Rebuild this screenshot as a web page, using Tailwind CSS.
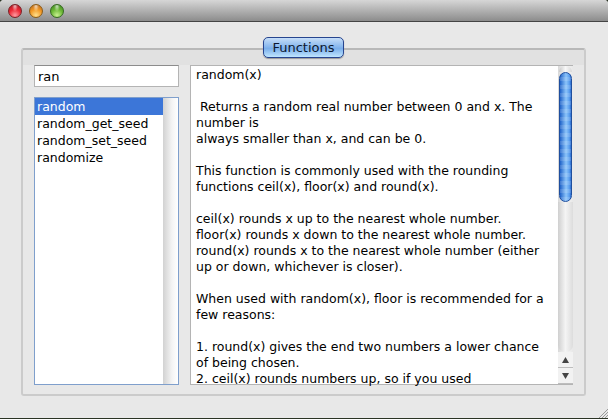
<!DOCTYPE html>
<html lang="en">
<head>
  <meta charset="UTF-8">
  <title>Functions</title>
  <script src="https://cdn.jsdelivr.net/npm/@tailwindcss/browser@4"></script>
</head>
<body class="w-[608px] h-[419px] overflow-hidden bg-[#2a3324] font-['DejaVu_Sans',sans-serif] text-[12px] text-black">

  <div class="relative w-[608px] h-[418px] flex flex-col bg-[#e8e8e8] rounded-t-[4px] overflow-hidden">

    <!-- title bar -->
    <div class="h-[22px] shrink-0 flex items-center gap-[7px] pl-[8px] pt-[1px] border-b border-[#444] bg-[linear-gradient(to_bottom,#d6d6d6,#8c8c8c)]">
      <span class="w-[14px] h-[14px] rounded-full border border-[#7a2226] bg-[radial-gradient(ellipse_at_50%_10%,#ffffffb0,transparent_35%),radial-gradient(circle_at_50%_85%,#ff9aa0,#ee2a36_50%,#a01620)]"></span>
      <span class="w-[14px] h-[14px] rounded-full border border-[#8a5c18] bg-[radial-gradient(ellipse_at_50%_10%,#ffffffb0,transparent_35%),radial-gradient(circle_at_50%_85%,#ffe08c,#f29a26_50%,#b0601a)]"></span>
      <span class="w-[14px] h-[14px] rounded-full border border-[#356a20] bg-[radial-gradient(ellipse_at_50%_10%,#ffffffb0,transparent_35%),radial-gradient(circle_at_50%_85%,#c8f090,#6cb836_50%,#3a8020)]"></span>
    </div>

    <!-- group box -->
    <div class="relative mt-[26px] ml-[21px] w-[565px] h-[348px] flex gap-[11px] pt-[15px] pl-[11px] rounded-[3px] border-2 border-[#cbcbcb] border-t-[#b8b8b8] bg-[linear-gradient(to_bottom,#e1e1e1_15px,#e8e8e8_15px)]">

      <!-- tab button -->
      <div class="absolute left-[240px] top-[-13px] w-[81px] h-[21px] flex items-center justify-center rounded-[5px] border border-[#27458f] bg-[linear-gradient(to_bottom,#c6def8,#8ab8ee_45%,#7aaeea_55%,#bfe6ff)] shadow-[0_1px_1px_#999] text-[13px] text-[#0c1830]">Functions</div>

      <!-- left column -->
      <div class="w-[145px] flex flex-col gap-[10px]">
        <input value="ran" class="w-[145px] h-[22px] pl-[3px] pt-[1px] bg-white border border-[#b4b4b4] border-t-[#8c8c8c] text-[13px] text-black outline-none">
        <div class="h-[288px] flex border border-[#7f9fcc] bg-white">
          <ul class="flex-1 text-[12.5px] leading-[16px]">
            <li class="pl-[2px] pt-[1px] bg-[#3c76d8] text-white">random</li>
            <li class="pl-[2px] pt-[1px]">random_get_seed</li>
            <li class="pl-[2px] pt-[1px]">random_set_seed</li>
            <li class="pl-[2px] pt-[1px]">randomize</li>
          </ul>
          <div class="w-[15px] bg-[linear-gradient(to_right,#d2d2d2,#f4f4f4_60%,#fff)]"></div>
        </div>
      </div>

      <!-- help text -->
      <div class="w-[383px] h-[320px] flex border border-[#b4b4b4] border-r-0 bg-white">
        <div class="flex-1 pl-[5px] pt-[1px] text-[12.5px] leading-[16px] whitespace-pre">random(x)

 Returns a random real number between 0 and x. The
number is
always smaller than x, and can be 0.

This function is commonly used with the rounding
functions ceil(x), floor(x) and round(x).

ceil(x) rounds x up to the nearest whole number.
floor(x) rounds x down to the nearest whole number.
round(x) rounds x to the nearest whole number (either
up or down, whichever is closer).

When used with random(x), floor is recommended for a
few reasons:

1. round(x) gives the end two numbers a lower chance
of being chosen.
2. ceil(x) rounds numbers up, so if you used</div>

        <!-- scroll bar -->
        <div class="w-[15px] shrink-0 flex flex-col bg-[linear-gradient(to_right,#d8d8d8,#f6f6f6_50%,#e8e8e8)]">
          <div class="h-[6px] mx-[1px] rounded-t-[6px] bg-[linear-gradient(to_right,#c8c8c8,#f8f8f8,#d8d8d8)]"></div>
          <div class="h-[130px] mx-[1px] rounded-[7px] border border-[#1f4f9e] bg-[repeating-linear-gradient(to_bottom,#ffffff00_0,#ffffff00_4px,#ffffff22_4px,#ffffff22_8px),linear-gradient(to_right,#1f62c8,#8cc4fa_55%,#5a9eee_85%,#2a6cd0)]"></div>
          <div class="flex-1 rounded-b-[7px] bg-[linear-gradient(to_right,#cfcfcf,#f4f4f4_50%,#dcdcdc)]"></div>
          <div class="h-[16px] flex items-center justify-center border-b border-[#bdbdbd] bg-[#f2f2f2]">
            <svg width="7" height="6" viewBox="0 0 7 6"><polygon points="3.5,0 7,6 0,6" fill="#444"/></svg>
          </div>
          <div class="h-[16px] flex items-center justify-center border-b border-[#bdbdbd] bg-[#f2f2f2]">
            <svg width="7" height="6" viewBox="0 0 7 6"><polygon points="0,0 7,0 3.5,6" fill="#444"/></svg>
          </div>
        </div>
      </div>
    </div>

    <!-- resize grip -->
    <svg class="absolute right-0 bottom-0" width="10" height="10" viewBox="0 0 10 10">
      <path d="M1 10L10 1M4 10L10 4M7 10L10 7" stroke="#9a9a9a" stroke-width="1"/>
    </svg>
  </div>
</body>
</html>
